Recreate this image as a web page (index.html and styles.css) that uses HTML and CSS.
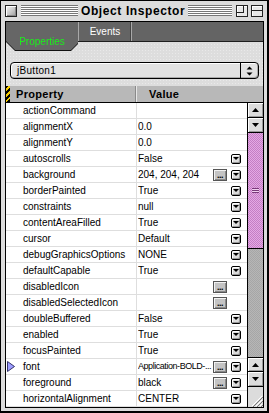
FILE: index.html
```html
<!DOCTYPE html>
<html>
<head>
<meta charset="utf-8">
<link rel="stylesheet" href="styles.css">
</head>
<body>
<div class="window">
  <div class="titlebar">
    <span class="closebox"></span>
    <span class="stripes stripes-left"></span>
    <span class="title">Object Inspector</span>
    <span class="stripes stripes-right"></span>
    <span class="zoombox"><span class="zoom-inner"></span></span>
    <span class="collapsebox"><span class="collapse-line"></span></span>
  </div>
  <div class="panel">
    <div class="tabs">
      <div class="tab-active-wrap"><div class="tab-active">Properties</div></div>
      <div class="tab">Events</div>
      <div class="tab-fill"></div>
    </div>
    <div class="picker">
      <span class="picker-label">jButton1</span>
      <span class="picker-arrows">
        <svg width="7" height="10" viewBox="0 0 7 10"><path d="M3.5 0.5 L6.5 3.5 L0.5 3.5 Z M0.5 6.5 L6.5 6.5 L3.5 9.5 Z" fill="#000"/></svg>
      </span>
    </div>
    <div class="inspector">
      <div class="header">
        <span class="marker"></span>
        <span class="h-prop">Property</span>
        <span class="h-val">Value</span>
      </div>
      <div class="body">
        <div class="rows">
          <div class="row"><div class="name"><span class="slot"></span>actionCommand</div><div class="value"><span class="vtext"></span><span class="eslot"></span><span class="dslot"></span></div></div>
          <div class="row"><div class="name"><span class="slot"></span>alignmentX</div><div class="value"><span class="vtext">0.0</span><span class="eslot"></span><span class="dslot"></span></div></div>
          <div class="row"><div class="name"><span class="slot"></span>alignmentY</div><div class="value"><span class="vtext">0.0</span><span class="eslot"></span><span class="dslot"></span></div></div>
          <div class="row"><div class="name"><span class="slot"></span>autoscrolls</div><div class="value"><span class="vtext">False</span><span class="eslot"></span><span class="dslot"><span class="pop"></span></span></div></div>
          <div class="row"><div class="name"><span class="slot"></span>background</div><div class="value"><span class="vtext">204, 204, 204</span><span class="eslot"><span class="ell">...</span></span><span class="dslot"><span class="pop"></span></span></div></div>
          <div class="row"><div class="name"><span class="slot"></span>borderPainted</div><div class="value"><span class="vtext">True</span><span class="eslot"></span><span class="dslot"><span class="pop"></span></span></div></div>
          <div class="row"><div class="name"><span class="slot"></span>constraints</div><div class="value"><span class="vtext">null</span><span class="eslot"></span><span class="dslot"><span class="pop"></span></span></div></div>
          <div class="row"><div class="name"><span class="slot"></span>contentAreaFilled</div><div class="value"><span class="vtext">True</span><span class="eslot"></span><span class="dslot"><span class="pop"></span></span></div></div>
          <div class="row"><div class="name"><span class="slot"></span>cursor</div><div class="value"><span class="vtext">Default</span><span class="eslot"></span><span class="dslot"><span class="pop"></span></span></div></div>
          <div class="row"><div class="name"><span class="slot"></span>debugGraphicsOptions</div><div class="value"><span class="vtext">NONE</span><span class="eslot"></span><span class="dslot"><span class="pop"></span></span></div></div>
          <div class="row"><div class="name"><span class="slot"></span>defaultCapable</div><div class="value"><span class="vtext">True</span><span class="eslot"></span><span class="dslot"><span class="pop"></span></span></div></div>
          <div class="row"><div class="name"><span class="slot"></span>disabledIcon</div><div class="value"><span class="vtext"></span><span class="eslot"><span class="ell">...</span></span><span class="dslot"></span></div></div>
          <div class="row"><div class="name"><span class="slot"></span>disabledSelectedIcon</div><div class="value"><span class="vtext"></span><span class="eslot"><span class="ell">...</span></span><span class="dslot"></span></div></div>
          <div class="row"><div class="name"><span class="slot"></span>doubleBuffered</div><div class="value"><span class="vtext">False</span><span class="eslot"></span><span class="dslot"><span class="pop"></span></span></div></div>
          <div class="row"><div class="name"><span class="slot"></span>enabled</div><div class="value"><span class="vtext">True</span><span class="eslot"></span><span class="dslot"><span class="pop"></span></span></div></div>
          <div class="row"><div class="name"><span class="slot"></span>focusPainted</div><div class="value"><span class="vtext">True</span><span class="eslot"></span><span class="dslot"><span class="pop"></span></span></div></div>
          <div class="row"><div class="name"><span class="slot"><svg class="tri" width="8" height="11" viewBox="0 0 8 11"><path d="M0.5 0.5 L7.5 5.5 L0.5 10.5 Z" fill="#9c9cff" stroke="#33336a" stroke-width="1"/></svg></span>font</div><div class="value"><span class="vtext vtext-narrow">Application-BOLD-...</span><span class="eslot"><span class="ell">...</span></span><span class="dslot"><span class="pop"></span></span></div></div>
          <div class="row"><div class="name"><span class="slot"></span>foreground</div><div class="value"><span class="vtext">black</span><span class="eslot"><span class="ell">...</span></span><span class="dslot"><span class="pop"></span></span></div></div>
          <div class="row"><div class="name"><span class="slot"></span>horizontalAlignment</div><div class="value"><span class="vtext">CENTER</span><span class="eslot"></span><span class="dslot"><span class="pop"></span></span></div></div>
        </div>
        <div class="scrollbar">
          <div class="sbtn"><svg width="7" height="4" viewBox="0 0 7 4"><path d="M3.5 0 L7 4 L0 4 Z" fill="#000"/></svg></div>
          <div class="sbtn"><svg width="7" height="4" viewBox="0 0 7 4"><path d="M0 0 L7 0 L3.5 4 Z" fill="#000"/></svg></div>
          <div class="thumb"><span class="grip"></span></div>
          <div class="track"></div>
          <div class="sbtn sbtn-top"><svg width="7" height="4" viewBox="0 0 7 4"><path d="M3.5 0 L7 4 L0 4 Z" fill="#000"/></svg></div>
          <div class="sbtn"><svg width="7" height="4" viewBox="0 0 7 4"><path d="M0 0 L7 0 L3.5 4 Z" fill="#000"/></svg></div>
          <div class="grow"><svg width="14" height="14" viewBox="0 0 14 14"><path d="M13 3 L3 13 M13 7 L7 13 M13 11 L11 13" stroke="#fff" stroke-width="1"/><path d="M14 4 L4 14 M14 8 L8 14 M14 12 L12 14" stroke="#777" stroke-width="1"/></svg></div>
        </div>
      </div>
    </div>
  </div>
</div>
</body>
</html>
```

FILE: styles.css
```css
html, body {
  margin: 0;
  padding: 0;
  background: #fff;
  overflow: hidden;
}

.window {
  width: 269px;
  height: 413px;
  box-sizing: border-box;
  border: 1px solid #000;
  border-right-width: 2px;
  border-bottom-width: 2px;
  background: #dcdcdc;
  padding: 0 3px 3px 4px;
  display: flex;
  flex-direction: column;
  font-family: "Liberation Sans", Arial, sans-serif;
}

/* Title bar */
.titlebar {
  height: 19px;
  display: flex;
  align-items: center;
  margin-bottom: 1px;
  flex: none;
}
.closebox {
  width: 12px;
  height: 12px;
  box-sizing: border-box;
  border: 1px solid #222;
  background: linear-gradient(135deg, #f4f4f4 0%, #c8c8c8 55%, #9a9a9a 100%);
  box-shadow: inset 1px 1px #fff, inset -1px -1px #888;
  flex: none;
}
.stripes {
  height: 11px;
  background: repeating-linear-gradient(to bottom, #777 0 1px, #fff 1px 2px);
  flex: none;
}
.stripes-left {
  width: 57px;
  margin-left: 4px;
}
.stripes-right {
  flex: 1;
  margin-right: 4px;
}
.title {
  font-weight: bold;
  font-size: 12px;
  letter-spacing: 0.6px;
  margin: 0 3px 0 3px;
  color: #000;
  line-height: 14px;
  white-space: nowrap;
}
.zoombox, .collapsebox {
  width: 12px;
  height: 12px;
  box-sizing: border-box;
  border: 1px solid #222;
  background: #e8e8e8;
  box-shadow: inset 1px 1px #fff;
  flex: none;
  display: flex;
}
.zoombox {
  margin-right: 3px;
}
.collapsebox {
  margin-right: 1px;
  align-items: center;
}
.zoom-inner {
  width: 6px;
  height: 6px;
  border-right: 1px solid #222;
  border-bottom: 1px solid #222;
}
.collapse-line {
  width: 100%;
  height: 1px;
  background: #222;
}

/* Panel */
.panel {
  flex: 1;
  border: 1px solid #000;
  background: #dddddd;
  background-image: radial-gradient(#e9e9e9 0.6px, transparent 0.7px);
  background-size: 3px 3px;
  display: flex;
  flex-direction: column;
}

.tabs {
  height: 19px;
  display: flex;
  align-items: flex-start;
  background: #646464;
  border-bottom: 1px solid #1e1e1e;
  flex: none;
}
.tab-active-wrap {
  filter: drop-shadow(0 1px 0 #111);
  flex: none;
}
.tab-active {
  width: 72px;
  height: 28px;
  box-sizing: border-box;
  padding-top: 14px;
  text-align: center;
  background: #666;
  color: #1cf01c;
  font-size: 10px;
  line-height: 12px;
  clip-path: polygon(0 0, 72px 0, 72px 21px, 65px 28px, 9px 28px, 0 19px);
}
.tab {
  width: 52px;
  height: 19px;
  border-left: 1px solid #a8a8a8;
  border-right: 1px solid #a8a8a8;
  box-shadow: inset -1px 0 #444;
  color: #fff;
  font-size: 10px;
  line-height: 19px;
  text-align: center;
  flex: none;
}
.tab-fill {
  flex: 1;
}

/* Picker */
.picker {
  margin: 20px 4px 0 4px;
  height: 17px;
  box-sizing: border-box;
  border: 1px solid #000;
  border-radius: 4px;
  background: #e2e2e2;
  box-shadow: inset 1px 1px #fff, inset -1px -1px #aaa;
  display: flex;
  align-items: center;
  flex: none;
}
.picker-label {
  flex: 1;
  padding-left: 6px;
  font-size: 10px;
  letter-spacing: 0.3px;
  line-height: 15px;
  color: #000;
}
.picker-arrows {
  width: 17px;
  height: 15px;
  border-left: 1px solid #000;
  display: flex;
  align-items: center;
  justify-content: center;
}

/* Inspector table */
.inspector {
  margin-top: 7px;
  flex: 1;
  display: flex;
  flex-direction: column;
}
.header {
  height: 16px;
  border-bottom: 1px solid #000;
  background: #b8b8b8;
  display: flex;
  align-items: stretch;
  font-weight: bold;
  font-size: 11px;
  letter-spacing: 0.3px;
  line-height: 16px;
  color: #000;
  flex: none;
}
.marker {
  width: 4px;
  background: repeating-linear-gradient(135deg, #000 0 2px, #f2c800 2px 4px);
  flex: none;
}
.h-prop {
  width: 126px;
  padding-left: 6px;
  box-sizing: border-box;
  border-right: 1px solid #8a8a8a;
  box-shadow: 1px 0 #e6e6e6;
  flex: none;
}
.h-val {
  padding-left: 13px;
}

.body {
  flex: 1;
  display: flex;
}
.rows {
  width: 241px;
  background: #fff;
  flex: none;
}
.row {
  height: 15px;
  border-bottom: 1px solid #dedede;
  display: flex;
  font-size: 10px;
  line-height: 15px;
  color: #000;
}
.name {
  width: 131px;
  box-sizing: border-box;
  border-right: 1px solid #dedede;
  display: flex;
  align-items: center;
  white-space: nowrap;
  flex: none;
}
.slot {
  width: 17px;
  height: 15px;
  display: flex;
  align-items: center;
  padding-left: 1px;
  box-sizing: border-box;
  flex: none;
}
.value {
  flex: 1;
  display: flex;
  align-items: center;
  padding: 0 5px 0 1px;
}
.vtext {
  flex: 1;
  white-space: nowrap;
  overflow: hidden;
}
.vtext-narrow {
  font-size: 9px;
  letter-spacing: -0.45px;
}
.eslot {
  width: 14px;
  height: 13px;
  flex: none;
  display: flex;
  align-items: center;
}
.dslot {
  width: 11px;
  height: 13px;
  margin-left: 4px;
  flex: none;
  display: flex;
  align-items: center;
}
.ell {
  width: 14px;
  height: 12px;
  box-sizing: border-box;
  border: 1px solid #555;
  background: #c4c4c4;
  box-shadow: inset 1px 1px #f2f2f2, inset -1px -1px #8a8a8a;
  font-size: 9px;
  line-height: 6px;
  font-weight: bold;
  letter-spacing: -0.5px;
  display: flex;
  align-items: flex-end;
  justify-content: center;
  padding-bottom: 2px;
  color: #000;
  overflow: hidden;
}
.pop {
  width: 10px;
  height: 10px;
  box-sizing: border-box;
  border: 1px solid #000;
  border-radius: 2px;
  background: #dcdcdc;
  box-shadow: inset 1px 1px #fff, inset -1px -1px #999;
  display: flex;
  align-items: center;
  justify-content: center;
}
.pop::after {
  content: "";
  width: 0;
  height: 0;
  border-left: 3px solid transparent;
  border-right: 3px solid transparent;
  border-top: 3px solid #000;
}

/* Scrollbar */
.scrollbar {
  width: 15px;
  border-left: 1px solid #000;
  display: flex;
  flex-direction: column;
  flex: none;
}
.sbtn {
  height: 14px;
  border-bottom: 1px solid #000;
  background: #dcdcdc;
  box-shadow: inset 1px 1px #fff, inset -1px -1px #9a9a9a;
  display: flex;
  align-items: center;
  justify-content: center;
  flex: none;
}
.sbtn-top {
  height: 13px;
  border-top: 1px solid #000;
}
.thumb {
  height: 115px;
  border-bottom: 1px solid #000;
  background: repeating-conic-gradient(#c47ec4 0 25%, #e4a8e4 0 50%) 0 0 / 2px 2px;
  display: flex;
  align-items: center;
  justify-content: center;
  flex: none;
}
.grip {
  width: 7px;
  height: 5px;
  background: repeating-linear-gradient(to bottom, #7a3a7a 0 1px, #f0d0f0 1px 2px);
}
.track {
  flex: 1;
  background: repeating-conic-gradient(#a6a6a6 0 25%, #b6b6b6 0 50%) 0 0 / 2px 2px;
}
.grow {
  height: 20px;
  background: #dcdcdc;
  display: flex;
  align-items: flex-end;
  justify-content: flex-end;
  flex: none;
}
```
